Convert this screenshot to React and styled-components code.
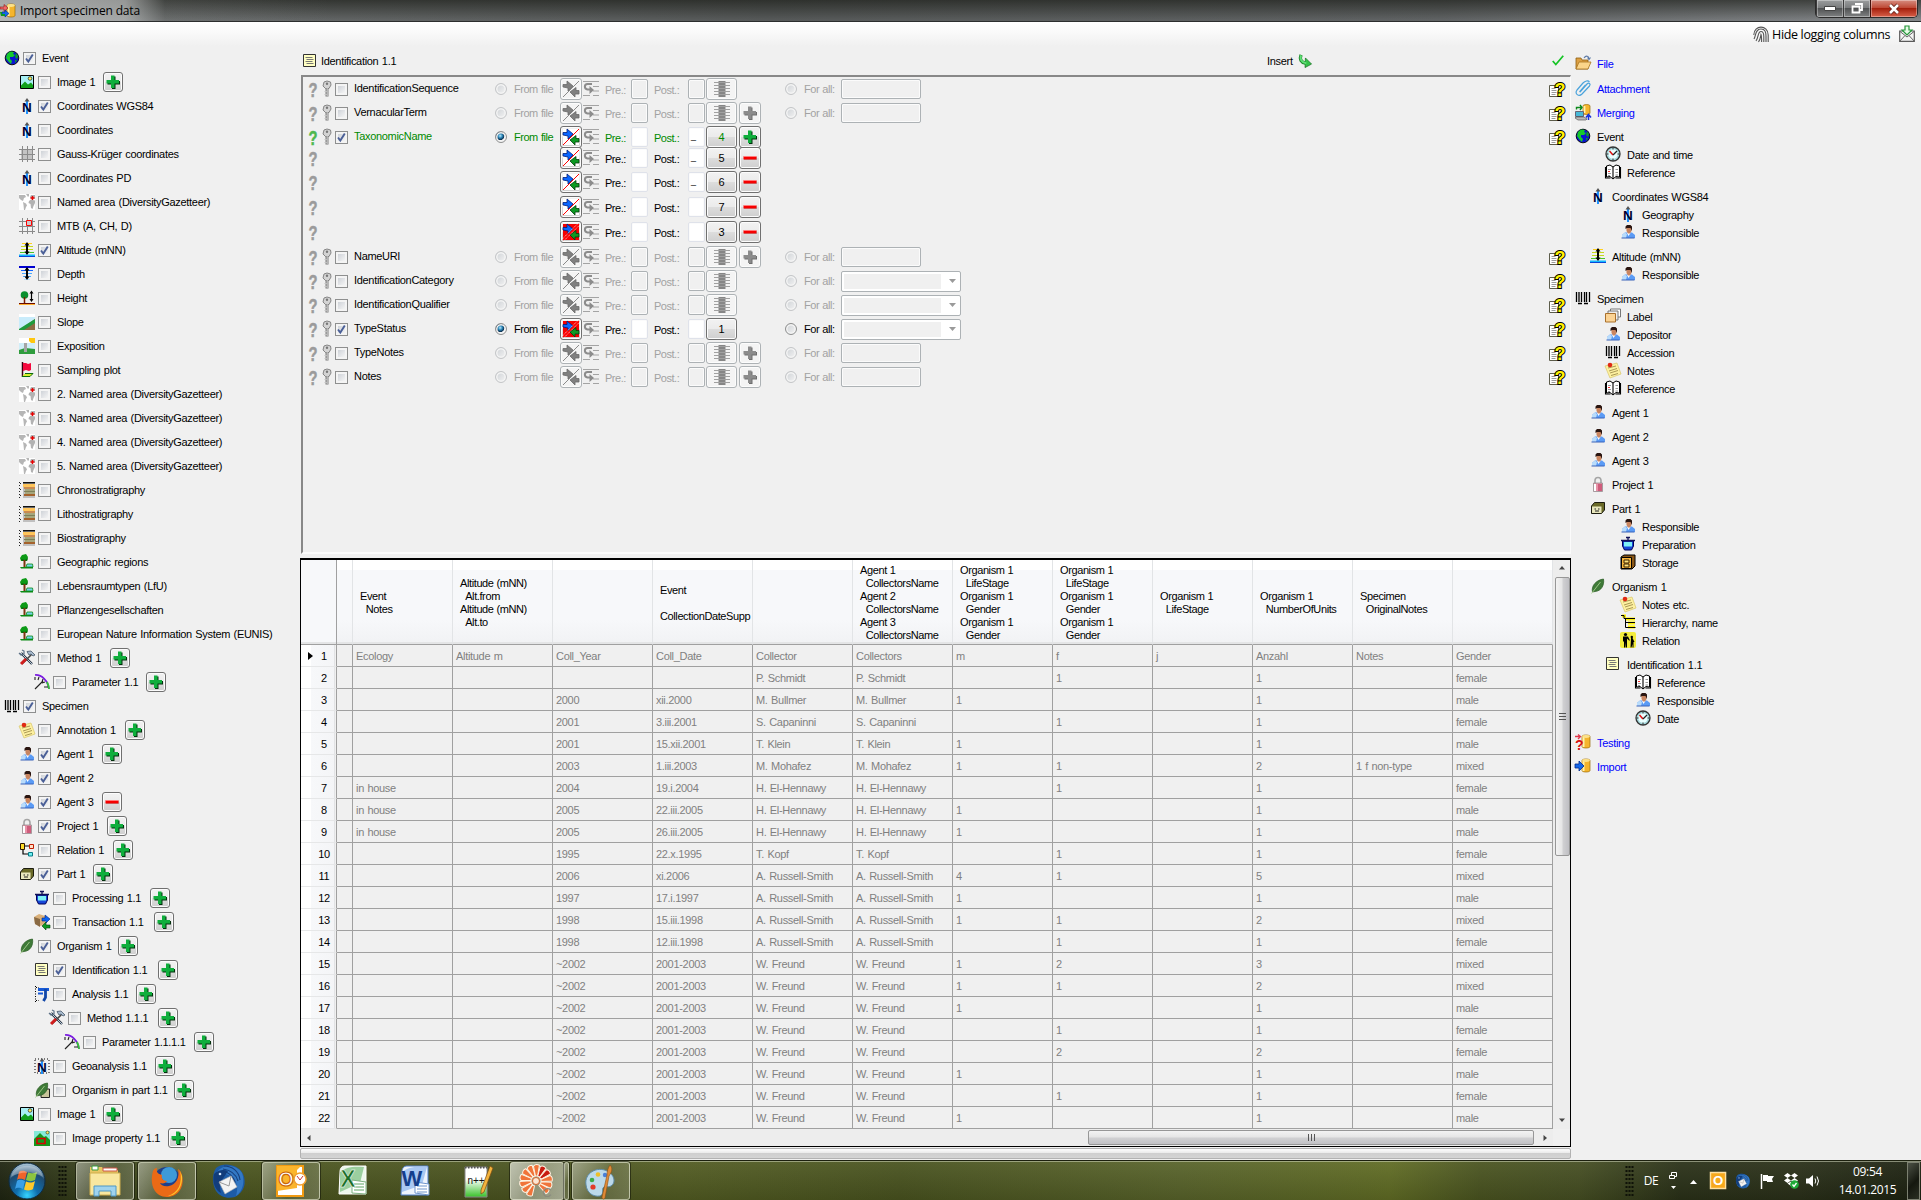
import React from 'react';
import styled, { createGlobalStyle, css } from 'styled-components';

const Global = createGlobalStyle`
  * { box-sizing: border-box; }
  html, body { margin: 0; padding: 0; overflow: hidden; background: #f0f0f0; }
  body { font: 11px/13px "Liberation Sans", Arial, sans-serif; letter-spacing: -0.31px; word-spacing: 0.7px; color: #000; }
  i { display: block; }
`;

/* ---------- icons, all on a 16 x 16 canvas ---------- */

const person = (
  <>
    <path d="M2 14v-3l3-2.5h7l3 2.5v3z" fill="#5b9bf5" />
    <path d="M2 14v-3l3-2.5 2 1.5-1 4z" fill="#b9dcfb" />
    <path d="M1.500 14h13" stroke="#3b62b8" />
    <path d="M7 9l1.500 3 2-3z" fill="#fff" />
    <path d="M6.500 3h5v4L10 9.500H8L6.500 7z" fill="#c98560" />
    <path d="M5.500 5V2.500L7 1h3.500L12 2.500V7L10.500 4H7z" fill="#2a1510" />
  </>
);
const world = (
  <>
    <path d="M0 0h16v16H0z" fill="#fff" />
    <path d="M0 1h6l1 2-2 1-1 3-2-1-2-2zM7 0h3v2l-1 1zM4 8l3 1.500 1 2-1 1.500-1 3-1 0-.5-5z" fill="#b6b6b6" />
    <path d="M11 3l1-2h4v4l-2-1-2 1zM10 7l2-1.500 4 1V9l-1.500 3-1 3-1.500-1-.5-4-2-1z" fill="#b2b2b2" />
    <path d="M13.500 2v4M11.500 4h4" stroke="#e80000" strokeWidth="1.400" />
  </>
);
const strata = (
  <>
    <path d="M4 0h12v16H4z" fill="#c0c0c0" />
    <path d="M4 0h12v1.500H4z" fill="#111" />
    <path d="M4 2h12v3H4z" fill="#ffc55a" />
    <path d="M5 5h11v2H5z" fill="#c98b52" />
    <path d="M6 7h10v5H6z" fill="#a6a67c" />
    <path d="M5 9h11v1H5z" fill="#7c8058" />
    <path d="M5 12h11v2H5z" fill="#a5622c" />
    <path d="M.5 0v16" stroke="#222" strokeDasharray="1 2" />
    <path d="M1 1.500h1M1 7.500h1M1 13.500h1" stroke="#222" />
  </>
);
const tree = (
  <>
    <path d="M1 4l2-3 4-1 2 3-1 4H2z" fill="#0c9a16" />
    <path d="M2 5l4 1 3-2-1 3H3z" fill="#066b0c" />
    <path d="M5.500 6v8" stroke="#7a3510" strokeWidth="2" />
    <path d="M1 13h13v1.500H2z" fill="#0a8a14" />
    <path d="M8 10h5.500l.5 3H7z" fill="#74d4ea" stroke="#0a8a14" strokeWidth=".8" />
  </>
);
const tools = (
  <>
    <path d="M2 3l11 11" stroke="#2a3644" strokeWidth="2.400" />
    <path d="M2 3l11 11" stroke="#b9cbdc" strokeWidth="1" />
    <path d="M0 3l2 2 3-1 0-3-2-1" fill="none" stroke="#5d7186" strokeWidth="1.200" />
    <path d="M13 4L3 14" stroke="#444" strokeWidth="1.600" />
    <path d="M7 9l-5 5" stroke="#d01c1c" strokeWidth="3" />
    <path d="M8 1.500l4-.5 4 4-2 1-2-2-2 1z" fill="#a9bccf" stroke="#46586b" strokeWidth=".8" />
  </>
);
const gauge = (
  <>
    <path d="M1 1c7-.5 13 6 14 14" fill="none" stroke="#7a1be0" strokeWidth="1.700" />
    <path d="M13 8c1 2 2 4 2 7" fill="none" stroke="#35c435" strokeWidth="1.800" />
    <path d="M1 15L9 7M1 3v3M5 3l-1 3M9 5l-1 3M11 8l-3 1M14 13h-4" stroke="#222" strokeWidth="1.100" />
  </>
);
const barcode = (
  <path d="M1.500 2v10M4 2v10M6.500 2v10M9.500 2v10M11.500 2v10M14.500 2v10M3 13.500h4M9 13.500h4" stroke="#000" strokeWidth="1.300" />
);
const note = (
  <>
    <path d="M0 4l12-3 4 11-11 4z" fill="#fdf0a0" stroke="#d8c76c" strokeWidth=".7" />
    <path d="M3 6l8-2M4 9l8-2.500M5 11l8-2.500M6 13.500l7-2" stroke="#a08f4c" strokeWidth=".9" />
    <circle cx="5" cy="3" r="2.300" fill="#e02a14" />
  </>
);
const north = (
  <>
    <path d="M8 2v14" stroke="#1e90ff" strokeWidth="2" />
    <path d="M5.500 3.500L8 0l2.500 3.500z" fill="#555" />
    <text x="3" y="13.500" fontSize="13.500" fontWeight="bold" fill="#000030" letterSpacing="0" fontFamily="Liberation Sans, sans-serif">N</text>
  </>
);
const swap = (a, b) => (
  <>
    <path d="M0 3.500h4V0l6 5-5 5V7L0 6z" fill={a} stroke={a === '#0a66ff' ? '#001c78' : '#6a6a6a'} strokeWidth=".8" />
    <path d="M16 9.500h-3V6.500l-6 4.500 5 5v-3h4z" fill={b} stroke={b === '#0c9a22' ? '#043c0a' : '#6a6a6a'} strokeWidth=".8" />
  </>
);
const cylinder = (
  <>
    <path d="M7 2.500c0-2 8-2 8 0v10c0 2-8 2-8 0z" fill="#f5b52c" stroke="#9a6a08" strokeWidth=".7" />
    <path d="M8.500 3v10" stroke="#fff3ae" strokeWidth="2" />
    <ellipse cx="11" cy="2.500" rx="3.800" ry="1.400" fill="#fbe28c" />
  </>
);
const leaf = (
  <>
    <path d="M2.500 14C1 8 6 2 13.500 1c1 6-2 12-8.500 12.500z" fill="#3f7a38" stroke="#25591e" strokeWidth=".7" />
    <path d="M1.500 15.500L10.500 4" stroke="#a6cf8d" strokeWidth=".9" />
  </>
);
const picture = (
  <>
    <path d="M1.500 1.500h13v13h-13z" fill="#a8f0f4" stroke="#000" />
    <path d="M2 14v-2.500l4-4 3 3 3-2 2 2.500v3z" fill="#12a01c" />
    <circle cx="11" cy="4.500" r="1.800" fill="#fff15a" stroke="#222" strokeWidth=".7" />
  </>
);
const pot = (
  <>
    <path d="M2.500 5h11v5l-2 4h-7l-2-4z" fill="#1746d8" stroke="#000058" />
    <path d="M4 6h8v4.500H4z" fill="#7cf0f6" />
    <path d="M1 4.500h14M8 4V1M6 1.500h4" stroke="#101058" strokeWidth="1.300" />
  </>
);
const box = (
  <>
    <path d="M1.500 6l3-3.500h10V10l-3 3.500h-10z" fill="#6a6a28" stroke="#1c1c10" />
    <path d="M2 6.500h9.500V13H2z" fill="#e8e7bd" />
    <path d="M4.500 9h1.500M8 9h1.500M5 11h4" stroke="#222" strokeWidth="1.200" />
  </>
);
const list = (
  <>
    <path d="M1.500 1.500h12v12h-12z" fill="#ffffc2" stroke="#333" />
    <path d="M3.500 4.500h7M4.500 6.500h7M3.500 8.500h7M4.500 10.500h7" stroke="#777" />
  </>
);
const book = (
  <>
    <path d="M1.500 2l3.500-1 3 2 3-2 3.500 1v11l-3.500-.5L8 15l-3-2.500-3.500.5z" fill="#fff" stroke="#000" />
    <path d="M8 3v12M.5 3v11h5M15.500 3v11h-5" stroke="#000" fill="none" strokeWidth="1.100" />
    <path d="M3 5.500h3M3 9.500h3M10.500 5.500h2.500M10.500 8.500h2.500M3 11.500h2M10.500 11h2.500" stroke="#999" strokeWidth="1" />
    <path d="M3 7.500h2" stroke="#e33" />
  </>
);
const clock = (
  <>
    <circle cx="8" cy="8" r="7" fill="#a5d8dc" stroke="#333" strokeWidth="1.300" />
    <circle cx="8" cy="8" r="4.800" fill="#eaffff" />
    <path d="M4.500 5L8 9" stroke="#e01010" strokeWidth="1.500" />
    <path d="M8 9l4-4" stroke="#222" strokeWidth="1.300" />
    <path d="M8 1.500v2M8 12.500v2M1.500 8h2M12.500 8h2" stroke="#333" />
  </>
);
const plus = (c, d) => (
  <>
    <path d="M6 1.500h3.500V6H14v3.500H9.500V14H6V9.500H1.500V6H6z" fill={d} transform="translate(1 1)" />
    <path d="M6 1.500h3.500V6H14v3.500H9.500V14H6V9.500H1.500V6H6z" fill={c} />
  </>
);
const qmark = (c) => (
  <text transform="translate(3.500 15.500) scale(.7 1)" fontSize="21" fontWeight="bold" fill={c} stroke={c} strokeWidth=".5" letterSpacing="0" fontFamily="Liberation Sans, sans-serif">?</text>
);

const ICONS = {
  person, world, strata, tree, tools, gauge, barcode, note, north, leaf, picture, pot, box, list, book, clock,
  globe: (
    <>
      <circle cx="8" cy="8" r="6.800" fill="#0a14d2" stroke="#000" strokeWidth=".9" />
      <path d="M3 4l3-2.500 4 .5-1 2 2 1-2 2-3 0 0 2 2 2-1 3-3-3-2-3z" fill="#16c92c" />
      <path d="M12 3l2 3-1 3-2-2zM11 10l2 0-2 3z" fill="#0f9e22" />
    </>
  ),
  grid: (
    <>
      <path d="M2 3h12v10H2z" fill="#c3c3c3" />
      <path d="M3.500 0v16M8.500 0v16M13.500 0v16M0 3.500h16M0 8.500h16M0 13.500h16" stroke="#8a8a8a" />
    </>
  ),
  mtb: (
    <>
      <path d="M3.500 0v16M8.500 0v16M13.500 0v16M0 3.500h16M0 8.500h16M0 13.500h16" stroke="#8a8a8a" />
      <path d="M7.500 2.500h5v5h-5z" fill="#c9c9c9" stroke="#f00" />
    </>
  ),
  altitude: (
    <>
      <path d="M3 1.500h10" stroke="#ffcf20" />
      <path d="M2 4.500h12M2 7.500h12" stroke="#c6d81c" />
      <path d="M1 10.500h14" stroke="#4cc428" />
      <path d="M0 13.500h16" stroke="#11b9ff" strokeWidth="2" />
      <path d="M0 14.500h16" stroke="#0a46d8" />
      <path d="M8 1v11" stroke="#000" strokeWidth="2" />
      <path d="M5.500 3.500L8 0l2.500 3.500zM5.500 9.500L8 13l2.500-3.500z" />
    </>
  ),
  depth: (
    <>
      <path d="M0 1h16" stroke="#0000d0" strokeWidth="2" />
      <path d="M2 4.500h12" stroke="#1166ff" />
      <path d="M3 7.500h10M4 10.500h8" stroke="#4aa8ff" />
      <path d="M5 13.500h6" stroke="#b7e2ff" />
      <path d="M8 2v10" stroke="#000" strokeWidth="2" />
      <path d="M5.500 4.500L8 1l2.500 3.500zM5.500 10.500L8 14l2.500-3.500z" />
    </>
  ),
  height: (
    <>
      <circle cx="5.500" cy="5" r="3.800" fill="#0a8f2e" />
      <path d="M5.500 7v6" stroke="#7a1c00" strokeWidth="1.500" />
      <path d="M0 13.500h16" stroke="#6b0b00" />
      <path d="M0 14.500h16" stroke="#ffb030" />
      <path d="M12.500 2v9" stroke="#000" strokeWidth="1.200" />
      <path d="M10.500 3.500l2-3 2 3zM10.500 9l2 3 2-3z" />
    </>
  ),
  slope: (
    <>
      <path d="M0 0h16v16H0z" fill="#fff" />
      <path d="M0 3h16v13H0z" fill="#c9ecfb" />
      <path d="M0 16L16 5v11z" fill="#8c6a43" />
      <path d="M0 15L16 5v4L5 16H0z" fill="#1f9a3c" />
    </>
  ),
  exposition: (
    <>
      <path d="M0 0h16v16H0z" fill="#fff" />
      <path d="M0 5h16v7H0z" fill="#d0eef9" />
      <path d="M10 0h6v5h-4l-2-2z" fill="#ffc70f" />
      <path d="M0 12l6-2 10 1v5H0z" fill="#2f9c3d" />
      <path d="M5 5h3v9H5z" fill="#a5a5a5" />
    </>
  ),
  flag: (
    <>
      <path d="M3.500 0v15" stroke="#3c0010" strokeWidth="1.500" />
      <path d="M4 1h3l2 1 3-1v7l-2 1-3-1-3 1z" fill="#f5093e" />
      <path d="M3 14.500h8l3-3H6" stroke="#0a6b0a" fill="#d6f02c" />
    </>
  ),
  lock: (
    <>
      <path d="M5 7V4.500C5 .5 11 .5 11 4.500V7" fill="none" stroke="#a5a5a5" strokeWidth="1.600" />
      <path d="M3.500 7h9v8.500h-9z" fill="#e892a8" stroke="#8b8b8b" strokeWidth=".7" />
      <path d="M8 8h4v7H8z" fill="#cf5d7c" />
      <path d="M4 8h2v7H4z" fill="#fff" />
    </>
  ),
  relation: (
    <>
      <path d="M5 4h6M4 7v5h6" stroke="#000" fill="none" strokeWidth="1.200" />
      <path d="M1.500 1.500h4v6h-4z" fill="#ffdc2a" stroke="#2b1500" />
      <path d="M10.500 2.500h4v4h-4z" fill="#ffe0c8" stroke="#c21c00" />
      <path d="M9.500 10.500h4v3.500h-4z" fill="#6ff0f2" stroke="#067a86" />
    </>
  ),
  transaction: (
    <>
      <path d="M0 3l5-3 6 2v7l-4 3-6-2z" fill="#d9b07a" />
      <path d="M0 3l6 2v8L1 10z" fill="#8a6a44" />
      <path d="M8 4h3V1l5 4-4 4V7H8z" fill="#0b63f2" stroke="#03237e" strokeWidth=".6" />
      <path d="M16 11h-4V8l-4 4 4 4v-2h4z" fill="#0c9a22" stroke="#043c0a" strokeWidth=".6" />
    </>
  ),
  caliper: (
    <>
      <path d="M1.500 0v16M2 1.500h3M2 14.500h3" stroke="#000" strokeDasharray="1 1.500" />
      <path d="M4 3.500h11" stroke="#1659d6" strokeWidth="3" />
      <path d="M4 7.500h5" stroke="#1659d6" strokeWidth="2" />
      <path d="M11.500 3v8.500l-2 3.500" stroke="#1046a8" strokeWidth="2.800" fill="none" />
    </>
  ),
  geo: (
    <>
      <rect x="1" y="1" width="14" height="14" fill="none" stroke="#000" strokeDasharray="1 2" />
      {north}
    </>
  ),
  leafbox: (
    <>
      <path d="M7 7h8.500v8.500H7z" fill="#c8c49a" stroke="#222" />
      {leaf}
    </>
  ),
  pictureprop: (
    <>
      <path d="M0 1h16v15H0z" fill="#86e9d8" />
      <path d="M0 9l6-6 4 4 2-1 4 4v6H0z" fill="#14981c" />
      <circle cx="13.500" cy="2.500" r="1.500" fill="#fff15a" stroke="#222" strokeWidth=".6" />
      <path d="M3 8.500h8v5H3z" fill="none" stroke="#d80000" strokeWidth="1.600" />
    </>
  ),
  folder: (
    <>
      <path d="M1 14V3h5l1 2h6v9z" fill="#dca044" stroke="#8d5d10" strokeWidth=".8" />
      <path d="M1 14l3-7h12l-3 7z" fill="#fbd58a" stroke="#a87420" strokeWidth=".8" />
      <path d="M9 3c2-3 5-2 5 1M12.500 2.500L14 4.500l1.500-2" fill="none" stroke="#5d7aa6" strokeWidth="1.100" />
    </>
  ),
  clip: (
    <path d="M5 12l7-8c2-2 4 0 2.500 2L7 14c-3 3-8 0-5-4l6-7c2-2 5-3 6.500-1M4.500 12l6-7" fill="none" stroke="#4aa3dc" strokeWidth="1.200" />
  ),
  merge: (
    <>
      <path d="M8 2c0-2 7-2 7 0v7c0 2-7 2-7 0z" fill="#f5b52c" stroke="#9a6a08" strokeWidth=".7" />
      <path d="M9.500 2v7" stroke="#fff3ae" strokeWidth="1.800" />
      <path d="M.5 7.500h8v5h-8z" fill="#46b9d8" stroke="#667" />
      <path d="M0 14l1-1h8l3 2-1 1H3z" fill="#bbb" stroke="#444" strokeWidth=".6" />
      <path d="M1.500 5.500v-2h5M5 1l2 2.500L5 6" fill="none" stroke="#0c8a1c" strokeWidth="1.400" />
      <path d="M13.500 16v-4M11 13.500l2.500-3 2.500 3" fill="none" stroke="#1530d8" strokeWidth="1.500" />
    </>
  ),
  cards: (
    <>
      <path d="M5.500 1h10v8h-10z" fill="#fff" stroke="#777" />
      <path d="M3 3h10v9H3z" fill="#eee" stroke="#777" />
      <path d="M.5 5.500h10v8.500H.5z" fill="#fbd394" stroke="#a9702c" />
    </>
  ),
  storage: (
    <>
      <path d="M1 3l3-2h11v11l-3 3H1z" fill="#8b5716" stroke="#000" />
      <path d="M1.500 3.500h10v11h-10z" fill="#f8b63c" stroke="#000" />
      <path d="M4 6h5v3H4zM4 10h5v3H4z" fill="#ffe27c" stroke="#3a2300" />
    </>
  ),
  hierarchy: (
    <>
      <path d="M2 2h4M5 5h10M8 9h7M8 13h7" stroke="#fff200" strokeWidth="3" />
      <path d="M1 1.500h3v3h11M5.500 4v9.500h10M6 8.500h9" stroke="#000" fill="none" />
    </>
  ),
  people: (
    <>
      <rect width="16" height="16" rx="2" fill="#f3ec3c" />
      <circle cx="5.500" cy="2.500" r="1.600" />
      <path d="M3 4.500h5l2 4-1 0-2-2v9H6v-5l-.6 5H4v-6l-1 0zM11 6l1.500 0 2 4-1 0v5.500h-1V12l-1 3.500h-1z" />
      <circle cx="11.800" cy="5" r="1.200" />
    </>
  ),
  testing: (
    <>
      {cylinder}
      <text x="0" y="15.500" fontSize="14" fontWeight="bold" fill="#d80f0f" letterSpacing="0" fontFamily="Liberation Sans, sans-serif">?</text>
      <path d="M0 2.500h5M3 .5l2.500 2L3 5" stroke="#e0364a" fill="none" strokeWidth="1.300" />
    </>
  ),
  import: (
    <>
      {cylinder}
      <path d="M0 6h4V3l5 5-5 5v-3H0z" fill="#1467ea" stroke="#022a8c" strokeWidth=".8" />
    </>
  ),
  app: (
    <>
      {cylinder}
      <path d="M0 4h4V1.500L8 5 4 8.500V6H0z" fill="#f06a6a" stroke="#901010" strokeWidth=".6" />
      <path d="M2 9h3V7l4 3.500-4 3.500v-2H2z" fill="#1467ea" stroke="#022a8c" strokeWidth=".6" />
      <path d="M0 9h2v2h3v2H1z" fill="#0c9a22" />
    </>
  ),
  key: (
    <>
      <path d="M5 1l3-1 3.500 1 .5 3-2 3.500H6.500L4 5z" fill="#d3d3d3" stroke="#858585" />
      <circle cx="8" cy="2.800" r="1.200" fill="#777" />
      <path d="M8 7v8.500" stroke="#7e7e7e" strokeWidth="3" />
      <path d="M8.200 7v8M5.500 10.500h2M5.500 13.500h2" stroke="#c4c4c4" strokeWidth="1.200" />
    </>
  ),
  q: qmark('#9b9b9b'),
  qgreen: qmark('#4fb84f'),
  plus: plus('#0fae3c', '#03300d'),
  plusgray: plus('#8c8c8c', '#6e6e6e'),
  minus: (
    <>
      <path d="M2 7h13v3H2z" fill="#6b6b6b" opacity=".4" />
      <path d="M1.500 6.500h13v3h-13z" fill="#f60000" />
      <path d="M1.500 6h13v1h-13z" fill="#ff7d7d" />
    </>
  ),
  swap: (
    <>
      <path d="M0 0h16v16H0z" fill="#fff" />
      {swap('#0a66ff', '#0c9a22')}
      <path d="M0 16L16 0" stroke="#f00" />
    </>
  ),
  swapred: (
    <>
      <path d="M0 0h16v16H0z" fill="#f60000" />
      {swap('#0a66ff', '#0c9a22')}
      <path d="M-.5 15L15 -.5M1 16.500L16.500 1" stroke="#fff" strokeWidth=".8" strokeDasharray="1.400 .7" />
      <path d="M0 16L16 0" stroke="#f00" strokeWidth="1.200" />
    </>
  ),
  swapgray: (
    <>
      {swap('#808080', '#808080')}
      <path d="M0 16L16 0" stroke="#8a8a8a" />
    </>
  ),
  wrap: (
    <>
      <path d="M0 .5h16M10 5.500h6M10 10h6M0 14.500h7M10 14.500h6" stroke="#a4a4a4" strokeWidth="1.100" />
      <path d="M9 3H4.500C1 3 1 8 4.500 8.500H8" fill="none" stroke="#8c8c8c" strokeWidth="2" />
      <path d="M6.500 5l4.500 4-4.500 4z" fill="#8c8c8c" />
    </>
  ),
  column: (
    <>
      <path d="M4.500 0h7v16h-7z" fill="#868686" />
      <path d="M0 1.500h16M0 4.500h16M0 7.500h16M0 10.500h16M0 13.500h16" stroke="#a0a0a0" />
    </>
  ),
  help: (
    <>
      <path d="M.5 4.500h9v11h-9z" fill="#fff" stroke="#5c5c4a" />
      <path d="M2.500 7.500h4M2.500 9.500h5M2.500 11.500h5M2.500 13.500h4" stroke="#9a9a9a" />
      <text x="5.500" y="15" fontSize="18" fontWeight="bold" fill="#fff200" stroke="#000" strokeWidth="2" paintOrder="stroke" letterSpacing="0" fontFamily="Liberation Sans, sans-serif">?</text>
    </>
  ),
  insert: (
    <>
      <path d="M3.500 1c-2 5 0 8.500 5 9.500" fill="none" stroke="#1f8a2c" strokeWidth="3.800" />
      <path d="M8.500 4.500l7 7-7.500 4z" fill="#35c24a" stroke="#146b1e" strokeWidth=".8" />
      <path d="M3.500 1.500c-1.500 4 0 8 6 9" fill="none" stroke="#5fe076" strokeWidth="2.200" />
    </>
  ),
  tick: <path d="M2 8l3.500 4L14 2" fill="none" stroke="#14c424" strokeWidth="2" />,
  finger: (
    <g fill="none" stroke="#555" strokeWidth="1.100">
      <path d="M.8 9C.8-1.500 15.200-1.500 15.200 9v7" />
      <path d="M1 13c2-3 1-10 7-10 4 0 5 3 5 7v6" />
      <path d="M3 15c3-4 1.500-9.500 5-9.500 2.500 0 2.800 2.500 2.800 5V16" />
      <path d="M5.500 16c2-3 2-5 2.500-7.500.8 1.500.6 4 .6 7.500" />
    </g>
  ),
  mail: (
    <>
      <path d="M.7 5h14.600v10.300H.7z" fill="#f4f4f4" stroke="#5a5a5a" strokeWidth="1.200" />
      <path d="M1 5.500L8 11l7-5.500M1 15l5-5.500M15 15l-5-5.500" fill="none" stroke="#666" />
      <path d="M6 0h4v4h3L8 9 3 4h3z" fill="#e6fbe6" stroke="#25963a" strokeWidth="1.200" />
    </>
  ),
};

const Svg = styled.svg`
  display: block;
  flex: none;
  overflow: visible;
`;
const Icon = ({ name, size = 16 }) => (
  <Svg width={size} height={size} viewBox="0 0 16 16">{ICONS[name]}</Svg>
);

/* ---------- shared controls ---------- */

const Check = styled.span`
  flex: none;
  width: 13px;
  height: 13px;
  border: 1px solid #8e8f8f;
  background: linear-gradient(135deg, #c4c9d0, #f6f6f6 85%);
  box-shadow: inset 0 0 0 2px #f4f4f4;
  display: flex;
  align-items: center;
  justify-content: center;
`;
const CheckBox = ({ on }) => (
  <Check>
    {on ? (
      <Svg width="11" height="11" viewBox="0 0 11 11">
        <path d="M2 5.500l2.300 3L8.800 1.500" fill="none" stroke="#4a5f97" strokeWidth="1.900" />
      </Svg>
    ) : null}
  </Check>
);

const Radio = styled.i`
  width: 12px;
  height: 12px;
  border-radius: 50%;
  border: 1px solid ${(p) => (p.$dim ? '#c4c6c8' : '#8e8f8f')};
  box-shadow: inset 0 0 0 1.500px #f4f4f4;
  background: ${(p) =>
    p.$on
      ? 'radial-gradient(circle at 42% 38%, #bfeafc 0, #2a86b8 25%, #0c2f4f 46%, #f4f4f4 54%)'
      : 'linear-gradient(135deg, #cdd1d5, #f4f4f4)'};
`;

const Button = styled.span`
  flex: none;
  display: flex;
  align-items: center;
  justify-content: center;
  width: ${(p) => p.$w || 22}px;
  height: ${(p) => p.$h || 22}px;
  border: 1px solid ${(p) => (p.$dim ? '#adb2b5' : '#707070')};
  border-radius: 3px;
  background: ${(p) => (p.$dim ? '#f4f4f4' : 'linear-gradient(#f2f2f2 0, #ebebeb 48%, #dddddd 50%, #cfcfcf)')};
  box-shadow: inset 0 0 0 1px #fcfcfc;
  color: ${(p) => p.$color || '#000'};
`;

/* ---------- window frame ---------- */

const Screen = styled.div`
  width: 1921px;
  height: 1200px;
  display: flex;
  flex-direction: column;
  background: #f0f0f0;
  overflow: hidden;
`;
const TitleBar = styled.header`
  height: 22px;
  flex: none;
  display: flex;
  justify-content: space-between;
  align-items: flex-start;
  border-bottom: 1px solid #2c2e2e;
  background:
    linear-gradient(90deg, rgba(205, 207, 207, .75), rgba(190, 192, 192, .7) 125px, rgba(150, 152, 152, .12) 165px, transparent 330px),
    linear-gradient(rgba(20, 22, 16, .6), rgba(90, 94, 94, 0) 95%),
    linear-gradient(90deg, #6a6d6d, #565959 40%, #606364 75%, #84878a);
`;
const Title = styled.div`
  display: flex;
  gap: 4px;
  height: 21px;
  align-items: center;
  font: 12px "Open Sans", "Noto Sans", sans-serif;
  letter-spacing: -0.16px;
  word-spacing: 0;
`;
const WinButtons = styled.div`
  display: flex;
  margin-right: 3px;
  border: 1px solid #2b2b2b;
  border-top: 0;
  border-radius: 0 0 5px 5px;
  overflow: hidden;
`;
const WinButton = styled.span`
  width: ${(p) => p.$w}px;
  height: 17px;
  display: flex;
  align-items: center;
  justify-content: center;
  border-left: 1px solid ${(p) => (p.$close ? '#43110c' : '#3b3b3b')};
  box-shadow: inset 0 0 0 1px rgba(255, 255, 255, .35);
  background: ${(p) =>
    p.$close
      ? 'linear-gradient(#d68d80, #bf4a37 45%, #a5200d 50%, #d8604a)'
      : 'linear-gradient(#9b9d9e, #7b7d7e 45%, #515354 50%, #7f8182)'};
`;
const ToolBar = styled.div`
  height: 24px;
  flex: none;
  display: flex;
  justify-content: flex-end;
  align-items: center;
  padding-right: 6px;
  background: linear-gradient(#fff, #fafafa 40%, #f0f0f0);
  font: 12.500px "Open Sans", "Noto Sans", sans-serif;
  letter-spacing: -0.34px;
  word-spacing: 0;
`;
const ToolLabel = styled.span`
  width: 130px;
  padding-left: 3px;
  white-space: nowrap;
`;
const Body = styled.main`
  flex: 1;
  display: flex;
  min-height: 0;
`;

/* ---------- left tree ---------- */

const Tree = styled.nav`
  width: 300px;
  flex: none;
`;
const TreeRow = styled.div`
  height: 24px;
  display: flex;
  align-items: center;
  padding-left: ${(p) => 4 + p.$level * 15}px;
  gap: 3px;
  white-space: nowrap;
`;
const TreeLabel = styled.span`
  ${(p) => p.$w && css`width: ${p.$w}px;`}
  padding-left: 3px;
  flex: none;
`;
const TREE = [
  [0, 'globe', 1, 'Event'],
  [1, 'picture', 0, 'Image 1', 103],
  [1, 'north', 1, 'Coordinates WGS84'],
  [1, 'north', 0, 'Coordinates'],
  [1, 'grid', 0, 'Gauss-Krüger coordinates'],
  [1, 'north', 0, 'Coordinates PD'],
  [1, 'world', 0, 'Named area (DiversityGazetteer)'],
  [1, 'mtb', 0, 'MTB (A, CH, D)'],
  [1, 'altitude', 1, 'Altitude (mNN)'],
  [1, 'depth', 0, 'Depth'],
  [1, 'height', 0, 'Height'],
  [1, 'slope', 0, 'Slope'],
  [1, 'exposition', 0, 'Exposition'],
  [1, 'flag', 0, 'Sampling plot'],
  [1, 'world', 0, '2. Named area (DiversityGazetteer)'],
  [1, 'world', 0, '3. Named area (DiversityGazetteer)'],
  [1, 'world', 0, '4. Named area (DiversityGazetteer)'],
  [1, 'world', 0, '5. Named area (DiversityGazetteer)'],
  [1, 'strata', 0, 'Chronostratigraphy'],
  [1, 'strata', 0, 'Lithostratigraphy'],
  [1, 'strata', 0, 'Biostratigraphy'],
  [1, 'tree', 0, 'Geographic regions'],
  [1, 'tree', 0, 'Lebensraumtypen (LfU)'],
  [1, 'tree', 0, 'Pflanzengesellschaften'],
  [1, 'tree', 0, 'European Nature Information System (EUNIS)'],
  [1, 'tools', 0, 'Method 1', 110],
  [2, 'gauge', 0, 'Parameter 1.1', 146],
  [0, 'barcode', 1, 'Specimen'],
  [1, 'note', 0, 'Annotation 1', 125],
  [1, 'person', 1, 'Agent 1', 102],
  [1, 'person', 1, 'Agent 2'],
  [1, 'person', 1, 'Agent 3', 102, 'minus'],
  [1, 'lock', 1, 'Project 1', 107],
  [1, 'relation', 0, 'Relation 1', 113],
  [1, 'box', 1, 'Part 1', 93],
  [2, 'pot', 0, 'Processing 1.1', 150],
  [2, 'transaction', 0, 'Transaction 1.1', 154],
  [1, 'leaf', 1, 'Organism 1', 118],
  [2, 'list', 1, 'Identification 1.1', 158],
  [2, 'caliper', 0, 'Analysis 1.1', 136],
  [3, 'tools', 0, 'Method 1.1.1', 158],
  [4, 'gauge', 0, 'Parameter 1.1.1.1', 194],
  [2, 'geo', 0, 'Geoanalysis 1.1', 155],
  [2, 'leafbox', 0, 'Organism in part 1.1', 174],
  [1, 'picture', 0, 'Image 1', 103],
  [2, 'pictureprop', 0, 'Image property 1.1', 168],
];

/* ---------- mapping form ---------- */

const Center = styled.section`
  width: 1271px;
  flex: none;
  display: flex;
  flex-direction: column;
`;
const StepHeader = styled.div`
  height: 29px;
  flex: none;
  display: grid;
  grid-template-columns: 19px 946px 31px 1fr 20px;
  align-items: center;
  padding: 1px 0 0 2px;
  white-space: nowrap;
`;
const FormPanel = styled.div`
  height: 479px;
  flex: none;
  margin-left: 1px;
  border: 2px solid;
  border-color: #888 #fbfbfb #fbfbfb #888;
  border-right-width: 1px;
`;
/* The first extra row is tucked 3px under the row that owns it. */
const FormRow = styled.div`
  height: ${(p) => p.$h || 24}px;
  padding: 0 0 0 3px;
  display: grid;
  grid-template-columns: 13px 16px 19px 141px 19px 46px 23px 22px 26px 23px 34px 18px 33px 46px 19px 37px 1fr 21px;
  grid-template-rows: 24px;
  align-items: center;
  align-content: ${(p) => (p.$h === 25 ? 'start' : 'end')};
  ${(p) => p.$front && css`position: relative; z-index: 1;`}
  white-space: nowrap;
  color: ${(p) => p.$color};
`;
const QCell = styled.span`
  margin-left: -1px;
  display: flex;
`;
const FieldName = styled.span`
  color: ${(p) => p.$color || '#000'};
  padding-bottom: 2px;
`;
const Tight = styled.span`
  letter-spacing: -0.48px;
  padding-top: ${(p) => p.$top || 0}px;
`;
const TextBox = styled.span`
  width: ${(p) => p.$w || 17}px;
  height: 20px;
  border: 1px solid ${(p) => (p.$dim ? '#adb2b5' : '#dfe2ea')};
  border-radius: 2px;
  background: ${(p) => (p.$dim ? '#f0f0f0' : '#fff')};
  box-shadow: inset 0 0 0 1px #fbfbfb;
  color: #000;
  font-size: 9px;
  padding: 2px 2px 0;
`;
const Combo = styled.span`
  width: 120px;
  height: 21px;
  border: 1px solid #adb2b5;
  border-radius: 2px;
  background: #fff;
  padding: 2px 4px 2px 2px;
  display: flex;
  align-items: center;
  justify-content: space-between;
`;
const ComboFill = styled.span`
  width: 97px;
  height: 15px;
  background: #f0f0f0;
`;

const FIELDS = [
  { name: 'IdentificationSequence', value: 'text' },
  { name: 'VernacularTerm', value: 'text', add: 'plusgray' },
  { name: 'TaxonomicName', color: '#008a00', on: 1, swap: 'swap', post: '_', col: '4', add: 'plus' },
  { sub: 1, h: 21, swap: 'swap', post: '_', col: '5', add: 'minus' },
  { sub: 1, h: 25, swap: 'swap', post: '_', col: '6', add: 'minus' },
  { sub: 1, h: 25, swap: 'swap', post: '', col: '7', add: 'minus' },
  { sub: 1, h: 25, swap: 'swapred', post: '', col: '3', add: 'minus' },
  { name: 'NameURI', value: 'text', add: 'plusgray' },
  { name: 'IdentificationCategory', value: 'combo' },
  { name: 'IdentificationQualifier', value: 'combo' },
  { name: 'TypeStatus', on: 1, swap: 'swapred', post: '', col: '1', value: 'combo' },
  { name: 'TypeNotes', value: 'text', add: 'plusgray' },
  { name: 'Notes', value: 'text', add: 'plusgray' },
];

const Field = ({ f }) => {
  const active = f.on || f.sub;
  const color = active ? f.color || '#000' : '#a2a2a2';
  return (
    <FormRow $h={f.h} $color={color} $front={!!f.color}>
      <QCell><Icon name={f.color ? 'qgreen' : 'q'} /></QCell>
      <span>{!f.sub && <Icon name="key" />}</span>
      <span>{!f.sub && <CheckBox on={f.on} />}</span>
      <FieldName $color={f.color}>{f.name}</FieldName>
      <span>{!f.sub && <Radio $on={f.on} $dim={!f.on} />}</span>
      <Tight>{!f.sub && 'From file'}</Tight>
      <Button $dim={!active}><Icon name={f.swap || 'swapgray'} /></Button>
      <Icon name="wrap" />
      <Tight $top={2}>Pre.:</Tight>
      <TextBox $dim={!active} />
      <Tight $top={2}>Post.:</Tight>
      <TextBox $dim={!active}>{f.post}</TextBox>
      <Button $w={31} $dim={!active} $color={color}>{f.col || <Icon name="column" />}</Button>
      {f.add ? <Button $dim={f.add === 'plusgray'}><Icon name={f.add} /></Button> : <span />}
      <span>{f.value && <Radio $dim={!f.on} />}</span>
      <Tight>{f.value && 'For all:'}</Tight>
      {f.value === 'text' ? <TextBox $w={80} $dim /> : f.value === 'combo' ? (
        <Combo>
          <ComboFill />
          <Svg width="7" height="4" viewBox="0 0 7 4"><path d="M0 0h7L3.500 4z" fill="#9a9a9a" /></Svg>
        </Combo>
      ) : <span />}
      <span>{!f.sub && <Icon name="help" />}</span>
    </FormRow>
  );
};

/* ---------- data grid ---------- */

const Grid = styled.div`
  margin-top: 4px;
  height: 589px;
  flex: none;
  border: 1px solid #000;
  border-top-width: 2px;
  display: grid;
  grid-template-columns: 1252px 1fr;
  grid-template-rows: 569px 1fr;
`;
const Sheet = styled.div`
  display: grid;
  grid-template-columns: 36px 16px repeat(12, 100px);
  grid-template-rows: 85px;
  grid-auto-rows: 22px;
  white-space: nowrap;
`;
const HeadCell = styled.div`
  display: flex;
  flex-direction: column;
  justify-content: center;
  padding: 2px 1px 0 7px;
  overflow: hidden;
  border-right: 1px solid ${(p) => (p.$dark ? '#a0a0a0' : '#e2e4e6')};
  border-bottom: 1px solid #a0a0a0;
  box-shadow: inset 0 -2px 0 #e4e5e6;
  background: ${(p) => (p.$dark ? '#f7f8fa' : 'linear-gradient(#fff 10px, #f7f8fa 10px, #f7f8fa 60px, #f1f2f4)')};
  letter-spacing: -0.39px;
  word-spacing: .2px;
  white-space: pre;
`;
const RowHead = styled.div`
  border-right: 1px solid #a0a0a0;
  border-bottom: 1px solid #e6e7e8;
  background: linear-gradient(90deg, #fff 10px, #f7f8fa 10px, #f4f5f7 33px, #e2e3e5 33px, #e2e3e5 34px, #f0f0f0 34px);
  display: grid;
  grid-template-columns: 15px 16px;
  align-items: center;
  justify-items: center;
  padding-top: 1px;
`;
const Marker = styled.i`
  border: 4px solid transparent;
  border-left: 5px solid #000;
  border-right: 0;
  margin-left: 3px;
`;
const Cell = styled.div`
  border-right: 1px solid #a0a0a0;
  border-bottom: 1px solid #a0a0a0;
  color: #808080;
  padding: 5px 0 0 3px;
`;
const HEADS = [
  '',
  'Event\n  Notes',
  'Altitude (mNN)\n  Alt.from\nAltitude (mNN)\n  Alt.to',
  '',
  'Event\n\nCollectionDateSupp',
  '',
  'Agent 1\n  CollectorsName\nAgent 2\n  CollectorsName\nAgent 3\n  CollectorsName',
  'Organism 1\n  LifeStage\nOrganism 1\n  Gender\nOrganism 1\n  Gender',
  'Organism 1\n  LifeStage\nOrganism 1\n  Gender\nOrganism 1\n  Gender',
  'Organism 1\n  LifeStage',
  'Organism 1\n  NumberOfUnits',
  'Specimen\n  OriginalNotes',
  '',
];
const ROWS = [
  '|Ecology|Altitude m|Coll_Year|Coll_Date|Collector|Collectors|m|f|j|Anzahl|Notes|Gender',
  '|||||P. Schmidt|P. Schmidt||1||1||female',
  '|||2000|xii.2000|M. Bullmer|M. Bullmer|1|||1||male',
  '|||2001|3.iii.2001|S. Capaninni|S. Capaninni||1||1||female',
  '|||2001|15.xii.2001|T. Klein|T. Klein|1|||1||male',
  '|||2003|1.iii.2003|M. Mohafez|M. Mohafez|1|1||2|1 f non-type|mixed',
  '|in house||2004|19.i.2004|H. El-Hennawy|H. El-Hennawy||1||1||female',
  '|in house||2005|22.iii.2005|H. El-Hennawy|H. El-Hennawy|1|||1||male',
  '|in house||2005|26.iii.2005|H. El-Hennawy|H. El-Hennawy|1|||1||male',
  '|||1995|22.x.1995|T. Kopf|T. Kopf||1||1||female',
  '|||2006|xi.2006|A. Russell-Smith|A. Russell-Smith|4|1||5||mixed',
  '|||1997|17.i.1997|A. Russell-Smith|A. Russell-Smith|1|||1||male',
  '|||1998|15.iii.1998|A. Russell-Smith|A. Russell-Smith|1|1||2||mixed',
  '|||1998|12.iii.1998|A. Russell-Smith|A. Russell-Smith||1||1||female',
  '|||~2002|2001-2003|W. Freund|W. Freund|1|2||3||mixed',
  '|||~2002|2001-2003|W. Freund|W. Freund|1|1||2||mixed',
  '|||~2002|2001-2003|W. Freund|W. Freund|1|||1||male',
  '|||~2002|2001-2003|W. Freund|W. Freund||1||1||female',
  '|||~2002|2001-2003|W. Freund|W. Freund||2||2||female',
  '|||~2002|2001-2003|W. Freund|W. Freund|1|||1||male',
  '|||~2002|2001-2003|W. Freund|W. Freund||1||1||female',
  '|||~2002|2001-2003|W. Freund|W. Freund|1|||1||male',
].map((r) => r.split('|'));

const VScroll = styled.div`
  display: flex;
  flex-direction: column;
  align-items: center;
  background: #ededed;
  padding: 4px 0 5px 1px;
`;
const VThumb = styled.div`
  width: 15px;
  height: 279px;
  margin: 5px 0 auto;
  border: 1px solid #979797;
  border-radius: 2px;
  background: linear-gradient(90deg, #f3f3f3, #e6e6e6 45%, #d0d0d2 55%, #bfbfc3);
  display: flex;
  align-items: center;
  justify-content: center;
`;
const HScroll = styled.div`
  display: flex;
  align-items: center;
  background: #ededed;
  padding: 0 4px;
`;
const HThumb = styled.div`
  width: 446px;
  height: 15px;
  margin: 0 7px 0 auto;
  border: 1px solid #979797;
  border-radius: 2px;
  background: linear-gradient(#f3f3f3, #e6e6e6 45%, #d0d0d2 55%, #c2c2c6);
  display: flex;
  align-items: center;
  justify-content: center;
`;
const Corner = styled.div`
  background: #f0f0f0;
`;
const Arrow = ({ d }) => (
  <Svg width="8" height="8" viewBox="0 0 8 8"><path d={d} fill="#444" /></Svg>
);
const Progress = styled.div`
  height: 11px;
  margin-top: 1px;
  border: 1px solid #b2b2b2;
  border-radius: 2px;
  background: linear-gradient(#fdfdfd, #ececec 40%, #cfcfcf 50%, #d4d4d4);
`;

/* ---------- right step list ---------- */

const Steps = styled.aside`
  flex: 1;
  padding: 8px 0 0 4px;
`;
const Step = styled.div`
  height: 18px;
  margin-top: ${(p) => (p.$gap ? p.$gap : 0)}px;
  margin-left: ${(p) => p.$indent * 15}px;
  display: flex;
  align-items: center;
  gap: 6px;
  color: ${(p) => (p.$link ? '#0000ff' : '#000')};
  white-space: nowrap;
`;
const StepLabel = styled.span`
  padding-top: 2px;
`;
const STEPS = [
  [0, 'folder', 'File', 0, 1],
  [0, 'clip', 'Attachment', 7, 1],
  [0, 'merge', 'Merging', 6, 1],
  [0, 'globe', 'Event', 6],
  [2, 'clock', 'Date and time'],
  [2, 'book', 'Reference'],
  [1, 'north', 'Coordinates WGS84', 6],
  [3, 'north', 'Geography'],
  [3, 'person', 'Responsible'],
  [1, 'altitude', 'Altitude (mNN)', 6],
  [3, 'person', 'Responsible'],
  [0, 'barcode', 'Specimen', 6],
  [2, 'cards', 'Label'],
  [2, 'person', 'Depositor'],
  [2, 'barcode', 'Accession'],
  [2, 'note', 'Notes'],
  [2, 'book', 'Reference'],
  [1, 'person', 'Agent 1', 6],
  [1, 'person', 'Agent 2', 6],
  [1, 'person', 'Agent 3', 6],
  [1, 'lock', 'Project 1', 6],
  [1, 'box', 'Part 1', 6],
  [3, 'person', 'Responsible'],
  [3, 'pot', 'Preparation'],
  [3, 'storage', 'Storage'],
  [1, 'leaf', 'Organism 1', 6],
  [3, 'note', 'Notes etc.'],
  [3, 'hierarchy', 'Hierarchy, name'],
  [3, 'people', 'Relation'],
  [2, 'list', 'Identification 1.1', 6],
  [4, 'book', 'Reference'],
  [4, 'person', 'Responsible'],
  [4, 'clock', 'Date'],
  [0, 'testing', 'Testing', 6, 1],
  [0, 'import', 'Import', 6, 1],
];

/* ---------- taskbar ---------- */

const TaskBar = styled.footer`
  height: 40px;
  flex: none;
  display: flex;
  align-items: center;
  border-top: 1px solid #1c200e;
  box-shadow: inset 0 1px 0 rgba(210, 215, 190, .55);
  background:
    linear-gradient(rgba(255, 255, 255, .06), rgba(0, 0, 0, .12)),
    linear-gradient(90deg, #1f2511 0, #39421b 90px, #4c561f 220px, #4b5420 520px, #525c22 680px, #49531f 900px, #58632a 1180px, #606c24 1390px, #4a5420 1480px, #454e22 1580px, #2a3118 1680px, #2a3019 1800px, #1d2211 1921px);
  color: #fff;
  word-spacing: 0;
`;
const Orb = styled.div`
  width: 38px;
  height: 38px;
  margin-left: 8px;
`;
const Grip = styled.i`
  width: 9px;
  height: 32px;
  margin: 0 ${(p) => p.$r || 0}px 0 ${(p) => p.$l || 0}px;
  background: radial-gradient(circle, #0f1208 40%, transparent 50%) 0 0 / 3px 4px;
`;
const Task = styled.div`
  width: ${(p) => p.$w || 58}px;
  flex: none;
  height: 38px;
  margin: 1px ${(p) => p.$gap ?? 4}px 0 0;
  display: flex;
  align-items: center;
  justify-content: center;
  border-radius: 3px;
  ${(p) =>
    p.$open &&
    css`
      border: 1px solid rgba(225, 228, 205, .65);
      background: linear-gradient(115deg, rgba(255, 255, 255, ${p.$active ? 0.62 : 0.42}), rgba(255, 255, 255, ${p.$active ? 0.4 : 0.12}) 55%, rgba(255, 255, 255, ${p.$active ? 0.5 : 0.2}));
      box-shadow: 0 0 0 1px rgba(10, 12, 4, .5);
    `}
`;
const Tray = styled.div`
  margin-left: auto;
  height: 100%;
  display: flex;
  align-items: center;
  font: 12px "Open Sans", "Noto Sans", sans-serif;
  letter-spacing: -0.35px;
`;
const Slot = styled.span`
  width: ${(p) => p.$w}px;
  display: flex;
  justify-content: center;
  padding-top: ${(p) => p.$top || 0}px;
`;
const Clock = styled.span`
  width: 79px;
  margin-top: 1px;
  text-align: center;
  line-height: 18px;
`;
const ShowDesktop = styled.i`
  width: 13px;
  height: 38px;
  margin: 1px 1px 0 0;
  border: 1px solid #7c8070;
  background: linear-gradient(135deg, #4c5145, #15180f 55%, #2b3023);
`;
const Big = ({ children, size = 36 }) => (
  <Svg width={size} height={size} viewBox="0 0 36 36">{children}</Svg>
);
const Glyph = (props) => (
  <text textAnchor="middle" fontWeight="bold" fontFamily="Liberation Sans, sans-serif" letterSpacing="0" {...props} />
);
const Bird = () => (
  <>
    <path d="M5 5C13-2 28 2 32 11c4 9 1 18-8 23-8 2-15 0-19-6C1 21 1 11 5 5z" fill="#1d5ba6" />
    <path d="M6 9C12 1 25 1 31 10c3 8 1 18-6 23 2-7 2-14-4-19-6-4-11-4-15-5z" fill="#3378c4" />
    <path d="M13 3c8 0 15 5 16 14M12 6c7 1 13 5 15 12M11 8c6 1 11 5 13 11" fill="none" stroke="#173f7c" strokeWidth="1.100" />
    <path d="M3 11c4-4 10-5 14-3l-4 6c-4 5-5 10-3 16C4 27 1 19 3 11z" fill="#123d7c" />
    <path d="M8 19l12-6 6 11-12 7z" fill="#f3f3f3" stroke="#b5b5b5" strokeWidth=".6" />
    <path d="M8 19l10 4 2-10" fill="none" stroke="#999" />
    <circle cx="9" cy="11" r="1.300" fill="#cfe6ff" />
  </>
);
const rays = Array.from({ length: 12 }, (_, i) => i * 26 - 160);

const Taskbar = () => (
  <TaskBar>
    <Orb>
      <Svg width="38" height="38" viewBox="0 0 38 38">
        <defs>
          <radialGradient id="orb" cx="50%" cy="90%" r="85%">
            <stop offset="0" stopColor="#35d4ff" />
            <stop offset=".35" stopColor="#0f6fae" />
            <stop offset=".75" stopColor="#1e4c72" />
            <stop offset="1" stopColor="#9fbccf" />
          </radialGradient>
        </defs>
        <circle cx="19" cy="19" r="18" fill="url(#orb)" stroke="#0d2b42" />
        <path d="M11 10c3-2 5-1 8 0l-2 8c-3-1-5-2-8 0z" fill="#f0642a" />
        <path d="M20 10.500c3 1 6 1 9-.5l-2 8c-3 1.500-6 1.500-9 0z" fill="#8cc540" />
        <path d="M9 19c3-2 5-1 8 0l-2 8c-3-1-5-2-8 0z" fill="#3aa0e8" />
        <path d="M18 19.500c3 1.500 6 1.500 9-.5l-2 8c-3 2-6 1.500-9 .5z" fill="#fdc92c" />
        <path d="M3 15C6 0 32 0 35 15 26 9 12 9 3 15z" fill="#fff" opacity=".3" />
      </Svg>
    </Orb>
    <Grip $l={12} $r={9} />
    <Task $open>
      <Big>
        <path d="M3 4h12l2 3h14v24H3z" fill="#e8c663" />
        <path d="M5 3h6v4H5z" fill="#fff" stroke="#3a9a3a" />
        <path d="M16 5h14v3H16z" fill="#fff" stroke="#c54" />
        <path d="M3 10h30v22H3z" fill="#f9e7a0" stroke="#cfae4e" />
        <path d="M7 33V23h22v10h-5v-5H12v5z" fill="#9fd3ee" stroke="#4f97c4" />
      </Big>
    </Task>
    <Task $open>
      <Big>
        <circle cx="18" cy="18" r="14" fill="#1f3f8a" />
        <circle cx="20" cy="12" r="8" fill="#3e9ad8" />
        <path d="M4 8c-4 14 2 26 14 26 11 0 18-10 15-22-1-3-2-5-4-6 2 8-2 16-9 17-5 1-8-1-9-3 3 1 6 0 7-2-4 0-6-3-5-6-4-1-6-3-5-7-2 0-3 1-4 3z" fill="#ea6a16" />
        <path d="M31 8c3 12-2 22-12 25 8 0 15-9 14-20z" fill="#fcc62c" />
      </Big>
    </Task>
    <Task><Big><Bird /></Big></Task>
    <Task $open>
      <Big>
        <path d="M4 3h26v30H4z" fill="#fff" stroke="#f09a12" strokeWidth="2" />
        <path d="M4 3h24l-4 4v18L4 28z" fill="#fbb52c" />
        <Glyph x="13" y="23" fontSize="20" fill="#fff" stroke="#c8660a" strokeWidth="1.200">O</Glyph>
        <circle cx="27" cy="16" r="6" fill="#fff" stroke="#f0a030" strokeWidth="1.500" />
        <path d="M24 13l3 4 3-4" fill="none" stroke="#c33" />
      </Big>
    </Task>
    <Task>
      <Big>
        <path d="M5 9c0-4 2-6 5-6h21v28H4z" fill="#eef7ee" stroke="#fff" />
        <path d="M5 9c6-5 13-6 24-5l-4 16L5 29z" fill="#9bcf9f" />
        <path d="M17 17l14 2v12l-14-1z" fill="#fff" stroke="#7fb283" />
        <path d="M19 21h10M19 24h10M19 27h10" stroke="#5fa565" />
        <Glyph x="13" y="24" fontSize="23" fill="#1c6e28" stroke="#fff" strokeWidth=".5">X</Glyph>
      </Big>
    </Task>
    <Task>
      <Big>
        <path d="M5 9c0-4 2-6 5-6h21v29H4z" fill="#eef4fd" stroke="#4f7fcb" />
        <path d="M5 9c6-5 13-6 25-5l-5 18L5 29z" fill="#a9c8f2" />
        <path d="M18 19l14 2v11l-14-2z" fill="#fff" stroke="#6f95cc" />
        <path d="M20 23h10M20 26h10M20 29h10" stroke="#6f95cc" />
        <Glyph x="15" y="23" fontSize="22" fill="#153f8c">W</Glyph>
      </Big>
    </Task>
    <Task $gap={4}>
      <Big>
        <defs>
          <linearGradient id="npp" x2="0" y2="1"><stop offset=".4" stopColor="#fff" /><stop offset="1" stopColor="#39c22a" /></linearGradient>
        </defs>
        <path d="M6 4h22v30H6z" fill="url(#npp)" stroke="#888" />
        <path d="M6 4.500h22" stroke="#555" strokeWidth="2" strokeDasharray="1.500 1.500" />
        <Glyph x="17" y="21" fontSize="10" fill="#111" fontWeight="normal">n++</Glyph>
        <path d="M31 3l3 2-9 24-3 2v-4z" fill="#f2b23c" stroke="#7a4a10" strokeWidth=".7" />
      </Big>
    </Task>
    <Task $open $active $w={54} $gap={0}>
      <Big>
        {rays.map((a, i) => (
          <path key={a} d="M16.800 13L15.500 3q2.500-2.500 6-.5l-2.500 10.500z" transform={`rotate(${a} 17 18)`} fill={i > 6 && i < 9 ? '#c81c10' : '#f0743a'} stroke="#fff3e2" strokeWidth="1" />
        ))}
        <circle cx="17" cy="18" r="3.500" fill="#fbe6d2" stroke="#d8622a" />
        <Glyph x="28" y="34" fontSize="13" fill="#8b8b7c" fontWeight="normal">C</Glyph>
      </Big>
    </Task>
    <Task $open $w={5} $gap={3} />
    <Task $open>
      <Big>
        <path d="M3 22C1 10 14 3 24 8c8 4 9 12 4 15-4 2-6-1-8 2-1 3 1 6-3 8C10 34 4 30 3 22z" fill="#bcd9ea" stroke="#5d8ba6" />
        <circle cx="10" cy="24" r="2.600" fill="#e23a2a" />
        <circle cx="9" cy="17" r="2.300" fill="#3cab48" />
        <circle cx="15" cy="11.500" r="2.300" fill="#eebf28" />
        <circle cx="22" cy="12" r="2.200" fill="#4a7fd6" />
        <path d="M27 2c3 3 2 7-1 11l-4 22c-1 2-3 1-3-1l5-22c0-4 1-7 3-10z" fill="#e08a36" stroke="#8c4f14" strokeWidth=".6" />
      </Big>
    </Task>
    <Tray>
      <Grip $r={8} />
      <Slot $w={18}>DE</Slot>
      <Slot $w={26}>
        <Svg width="9" height="20" viewBox="0 0 9 20"><path d="M.5 4.500h5v3h-5zM2.500 4V1.500h5v4H6" fill="none" stroke="#fff" /><path d="M2 15h5l-2.500 3z" fill="#fff" /></Svg>
      </Slot>
      <Slot $w={14} $top={2}><Svg width="7" height="4" viewBox="0 0 7 4"><path d="M0 4h7L3.500 0z" fill="#fff" /></Svg></Slot>
      <Slot $w={36}>
        <Big size={17}>
          <path d="M1 1h32v34H1z" fill="#f7a81c" stroke="#ffe0a0" strokeWidth="3" />
          <Glyph x="17" y="28" fontSize="28" fill="#fff">O</Glyph>
        </Big>
      </Slot>
      <Slot $w={14}><Big size={16}><Bird /></Big></Slot>
      <Slot $w={34}>
        <Svg width="16" height="16" viewBox="0 0 16 16"><path d="M2.500 1v15" stroke="#fff" strokeWidth="1.500" /><path d="M4 2h5v1l6 0-2 3 1 3H8V8H4z" fill="#fff" /></Svg>
      </Slot>
      <Slot $w={14}>
        <Svg width="16" height="16" viewBox="0 0 16 16"><path d="M4.500 0L8 2.500 4.500 5 1 2.500zM11.500 0L15 2.500 11.500 5 8 2.500zM4.500 5L8 7.500 4.500 10 1 7.500zM11.500 5L15 7.500 11.500 10 8 7.500zM4.500 10.500L8 8.500l3.500 2L8 13z" fill="#fff" /><circle cx="11.500" cy="11.500" r="4.300" fill="#1faa38" /><path d="M9.500 11.500l1.500 2 2.500-3.500" stroke="#fff" fill="none" strokeWidth="1.300" /></Svg>
      </Slot>
      <Slot $w={30}>
        <Svg width="14" height="14" viewBox="0 0 14 14"><path d="M0 4.500h3L7 1v12L3 9.500H0z" fill="#fff" /><path d="M9 4.500q1.500 2.500 0 5M11 2.500q3 4.500 0 9" stroke="#fff" fill="none" /></Svg>
      </Slot>
      <Clock>09:54<br />14.01.2015</Clock>
      <ShowDesktop />
    </Tray>
  </TaskBar>
);

/* ---------- page ---------- */

export default function App() {
  return (
    <>
      <Global />
      <Screen>
        <TitleBar>
          <Title><Icon name="app" />Import specimen data</Title>
          <WinButtons>
            <WinButton $w={27}><Svg width="12" height="5" viewBox="0 0 12 5"><path d="M.5.500h11v4H.5z" fill="#fff" stroke="#444" /></Svg></WinButton>
            <WinButton $w={27}><Svg width="12" height="11" viewBox="0 0 12 11"><path d="M4 1h7v6H9M1.500 3.500h7v6h-7z" fill="none" stroke="#fff" strokeWidth="1.800" /></Svg></WinButton>
            <WinButton $w={47} $close><Svg width="12" height="10" viewBox="0 0 12 10"><path d="M2 1l8 8M10 1L2 9" stroke="#5a1a12" strokeWidth="4" /><path d="M2 1l8 8M10 1L2 9" stroke="#fff" strokeWidth="2.600" /></Svg></WinButton>
          </WinButtons>
        </TitleBar>
        <ToolBar>
          <Icon name="finger" />
          <ToolLabel>Hide logging columns</ToolLabel>
          <Icon name="mail" />
        </ToolBar>
        <Body>
          <Tree>
            {TREE.map(([level, icon, on, text, bx, btn], i) => (
              <TreeRow key={i} $level={level}>
                <Icon name={icon} />
                <CheckBox on={on} />
                <TreeLabel $w={bx && bx - 42 - level * 15}>{text}</TreeLabel>
                {bx && <Button $w={20} $h={20}><Icon name={btn || 'plus'} /></Button>}
              </TreeRow>
            ))}
          </Tree>
          <Center>
            <StepHeader>
              <Icon name="list" />
              <span>Identification 1.1</span>
              <span>Insert</span>
              <Icon name="insert" size={14} />
              <Icon name="tick" size={14} />
            </StepHeader>
            <FormPanel>
              {FIELDS.map((f, i) => <Field key={i} f={f} />)}
            </FormPanel>
            <Grid>
              <Sheet>
                <HeadCell $dark />
                {HEADS.map((h, i) => <HeadCell key={i}>{h}</HeadCell>)}
                {ROWS.map((row, r) => (
                  <React.Fragment key={r}>
                    <RowHead><span>{r === 0 && <Marker />}</span><span>{r + 1}</span></RowHead>
                    {row.map((c, i) => <Cell key={i}>{c}</Cell>)}
                  </React.Fragment>
                ))}
              </Sheet>
              <VScroll>
                <Arrow d="M1 5.500h6L4 2z" />
                <VThumb><Svg width="7" height="9" viewBox="0 0 7 9"><path d="M0 1.500h7M0 4.500h7M0 7.500h7" stroke="#555" /></Svg></VThumb>
                <Arrow d="M1 2.500h6L4 6z" />
              </VScroll>
              <HScroll>
                <Arrow d="M5.500 1v6L2 4z" />
                <HThumb><Svg width="9" height="7" viewBox="0 0 9 7"><path d="M1.500 0v7M4.500 0v7M7.500 0v7" stroke="#555" /></Svg></HThumb>
                <Arrow d="M2.500 1v6L6 4z" />
              </HScroll>
              <Corner />
            </Grid>
            <Progress />
          </Center>
          <Steps>
            {STEPS.map(([indent, icon, text, gap, link], i) => (
              <Step key={i} $indent={indent} $gap={gap} $link={link}>
                <Icon name={icon} />
                <StepLabel>{text}</StepLabel>
              </Step>
            ))}
          </Steps>
        </Body>
        <Taskbar />
      </Screen>
    </>
  );
}
